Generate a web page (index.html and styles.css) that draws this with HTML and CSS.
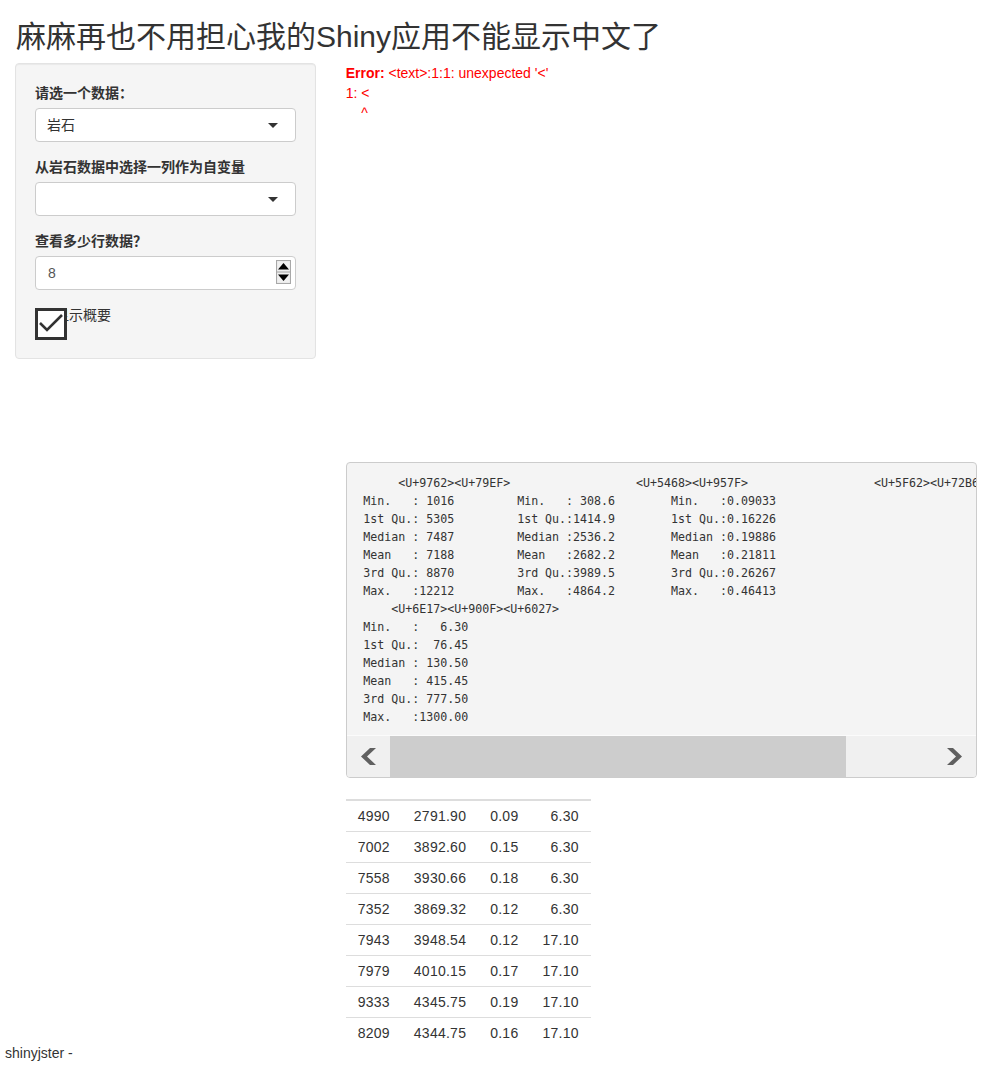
FILE: index.html
```html
<!DOCTYPE html>
<html lang="zh">
<head>
<meta charset="utf-8">
<title>Shiny 中文</title>
<link rel="stylesheet" href="styles.css">
</head>
<body>
<div class="container">
  <h2 class="title">麻麻再也不用担心我的Shiny应用不能显示中文了</h2>
  <div class="row">
    <div class="col-side">
      <div class="well">
        <div class="form-group">
          <label class="control-label">请选一个数据：</label>
          <div class="select"><span>岩石</span><span class="caret"></span></div>
        </div>
        <div class="form-group">
          <label class="control-label">从岩石数据中选择一列作为自变量</label>
          <div class="select"><span></span><span class="caret"></span></div>
        </div>
        <div class="form-group">
          <label class="control-label">查看多少行数据？</label>
          <div class="number">
            <span class="num-value">8</span>
            <svg class="spinner" width="15" height="24" viewBox="0 0 15 24">
              <rect x="0.5" y="0.5" width="14" height="23" fill="#e6e6e6" stroke="#a8a8a8"/>
              <rect x="1.5" y="1.5" width="12" height="10" fill="#f0f0f0"/>
              <rect x="1.5" y="12.5" width="12" height="10" fill="#f0f0f0"/>
              <line x1="1" y1="12" x2="14" y2="12" stroke="#a8a8a8"/>
              <polygon points="7.5,3 13,9.5 2,9.5" fill="#000"/>
              <polygon points="2,14.5 13,14.5 7.5,21" fill="#000"/>
            </svg>
          </div>
        </div>
        <div class="checkbox-row">
          <span class="check-label">显示概要</span>
          <span class="check-box">
            <svg width="26" height="26" viewBox="0 0 26 26"><polyline points="2,12 9,19 24,4" fill="none" stroke="#333" stroke-width="2.6"/></svg>
          </span>
        </div>
      </div>
    </div>
    <div class="col-main">
      <div class="plot-output">
        <div class="err"><b>Error:</b> &lt;text&gt;:1:1: unexpected '&lt;'
1: &lt;
    ^</div>
      </div>
      <div class="verbatim">
<pre class="code">      &lt;U+9762&gt;&lt;U+79EF&gt;                  &lt;U+5468&gt;&lt;U+957F&gt;                  &lt;U+5F62&gt;&lt;U+72B6&gt;
 Min.   : 1016         Min.   : 308.6        Min.   :0.09033  
 1st Qu.: 5305         1st Qu.:1414.9        1st Qu.:0.16226  
 Median : 7487         Median :2536.2        Median :0.19886  
 Mean   : 7188         Mean   :2682.2        Mean   :0.21811  
 3rd Qu.: 8870         3rd Qu.:3989.5        3rd Qu.:0.26267  
 Max.   :12212         Max.   :4864.2        Max.   :0.46413  
     &lt;U+6E17&gt;&lt;U+900F&gt;&lt;U+6027&gt;
 Min.   :   6.30  
 1st Qu.:  76.45  
 Median : 130.50  
 Mean   : 415.45  
 3rd Qu.: 777.50  
 Max.   :1300.00  </pre>
        <div class="hscroll">
          <div class="sbtn">
            <svg width="16" height="17" viewBox="0 0 16 17"><polygon points="10,0 16,0 7,8.5 16,17 10,17 1,8.5" fill="#606060"/></svg>
          </div>
          <div class="thumb"></div>
          <div class="track"></div>
          <div class="sbtn">
            <svg width="16" height="17" viewBox="0 0 16 17"><polygon points="6,0 0,0 9,8.5 0,17 6,17 15,8.5" fill="#606060"/></svg>
          </div>
        </div>
      </div>
      <table class="data">
        <tbody>
          <tr><td>4990</td><td>2791.90</td><td>0.09</td><td>6.30</td></tr>
          <tr><td>7002</td><td>3892.60</td><td>0.15</td><td>6.30</td></tr>
          <tr><td>7558</td><td>3930.66</td><td>0.18</td><td>6.30</td></tr>
          <tr><td>7352</td><td>3869.32</td><td>0.12</td><td>6.30</td></tr>
          <tr><td>7943</td><td>3948.54</td><td>0.12</td><td>17.10</td></tr>
          <tr><td>7979</td><td>4010.15</td><td>0.17</td><td>17.10</td></tr>
          <tr><td>9333</td><td>4345.75</td><td>0.19</td><td>17.10</td></tr>
          <tr><td>8209</td><td>4344.75</td><td>0.16</td><td>17.10</td></tr>
        </tbody>
      </table>
    </div>
  </div>
</div>
<div class="footer">shinyjster -</div>
</body>
</html>
```

FILE: styles.css
```css
* { box-sizing: border-box; }
html, body { margin: 0; padding: 0; }
body {
  font-family: "Liberation Sans", "Noto Sans CJK SC", sans-serif;
  font-size: 14px;
  line-height: 20px;
  color: #333;
  background: #fff;
}
.container { padding: 0 15px; }
.title {
  margin: 20px 0 10px;
  font-size: 30px;
  line-height: 33px;
  font-weight: 400;
  color: #333;
  padding-left: 1px;
}
.row { display: flex; margin: 0 -15px; }
.col-side { width: 33.3333%; padding: 0 15px; flex: none; }
.col-main { flex: 1; min-width: 0; padding: 0 15px; }

.well {
  padding: 19px;
  background: #f5f5f5;
  border: 1px solid #e3e3e3;
  border-radius: 4px;
  box-shadow: inset 0 1px 1px rgba(0,0,0,.05);
}
.form-group { margin-bottom: 15px; }
.control-label {
  display: block;
  margin-bottom: 5px;
  font-weight: 700;
}
.select {
  height: 34px;
  background: #fff;
  border: 1px solid #ccc;
  border-radius: 4px;
  padding: 6px 12px 6px 11px;
  display: flex;
  align-items: center;
  justify-content: space-between;
  color: #333;
}
.caret {
  width: 0; height: 0;
  border-style: solid;
  border-width: 5px 5px 0 5px;
  border-color: #333 transparent transparent transparent;
  margin-right: 5px;
}
.number {
  height: 34px;
  background: #fff;
  border: 1px solid #ccc;
  border-radius: 4px;
  padding: 0 4px 0 12px;
  display: flex;
  align-items: center;
  justify-content: space-between;
  color: #555;
}
.spinner { display: block; margin-top: -3px; }
.checkbox-row {
  position: relative;
  height: 34px;
}
.check-label { display: block; padding-left: 20px; font-weight: 400; }
.check-box {
  position: absolute;
  left: 0;
  top: 3px;
  width: 32px;
  height: 32px;
  border: 3px solid #333;
  background: #fff;
  display: flex;
  align-items: center;
  justify-content: center;
}

.plot-output { height: 399px; }
.err {
  color: red;
  white-space: pre;
  line-height: 20px;
}

.verbatim {
  margin-bottom: 10px;
  border: 1px solid #ccc;
  border-radius: 4px;
  background: #f4f4f4;
  overflow: hidden;
}
.code {
  margin: 0;
  padding: 11px 9.5px 9px;
  overflow: hidden;
  white-space: pre;
  font-family: "DejaVu Sans Mono", monospace;
  font-size: 11.63px;
  line-height: 18px;
  color: #333;
  border-bottom: 1px solid #fbfbfb;
}
.hscroll { display: flex; height: 41px; background: #f0f0f0; }
.sbtn {
  width: 43px;
  flex: none;
  display: flex;
  align-items: center;
  justify-content: center;
}
.thumb { width: 456px; flex: none; background: #cdcdcd; }
.track { flex: 1; }

.data {
  margin-top: 21px;
  border-collapse: collapse;
  border-top: 2px solid #ddd;
}
.data td {
  padding: 5px 12px;
  line-height: 20px;
  text-align: right;
  letter-spacing: 0.25px;
}
.data tr + tr td { border-top: 1px solid #ddd; }

.footer {
  margin-top: -5px;
  padding-left: 5px;
  line-height: 20px;
}
```
